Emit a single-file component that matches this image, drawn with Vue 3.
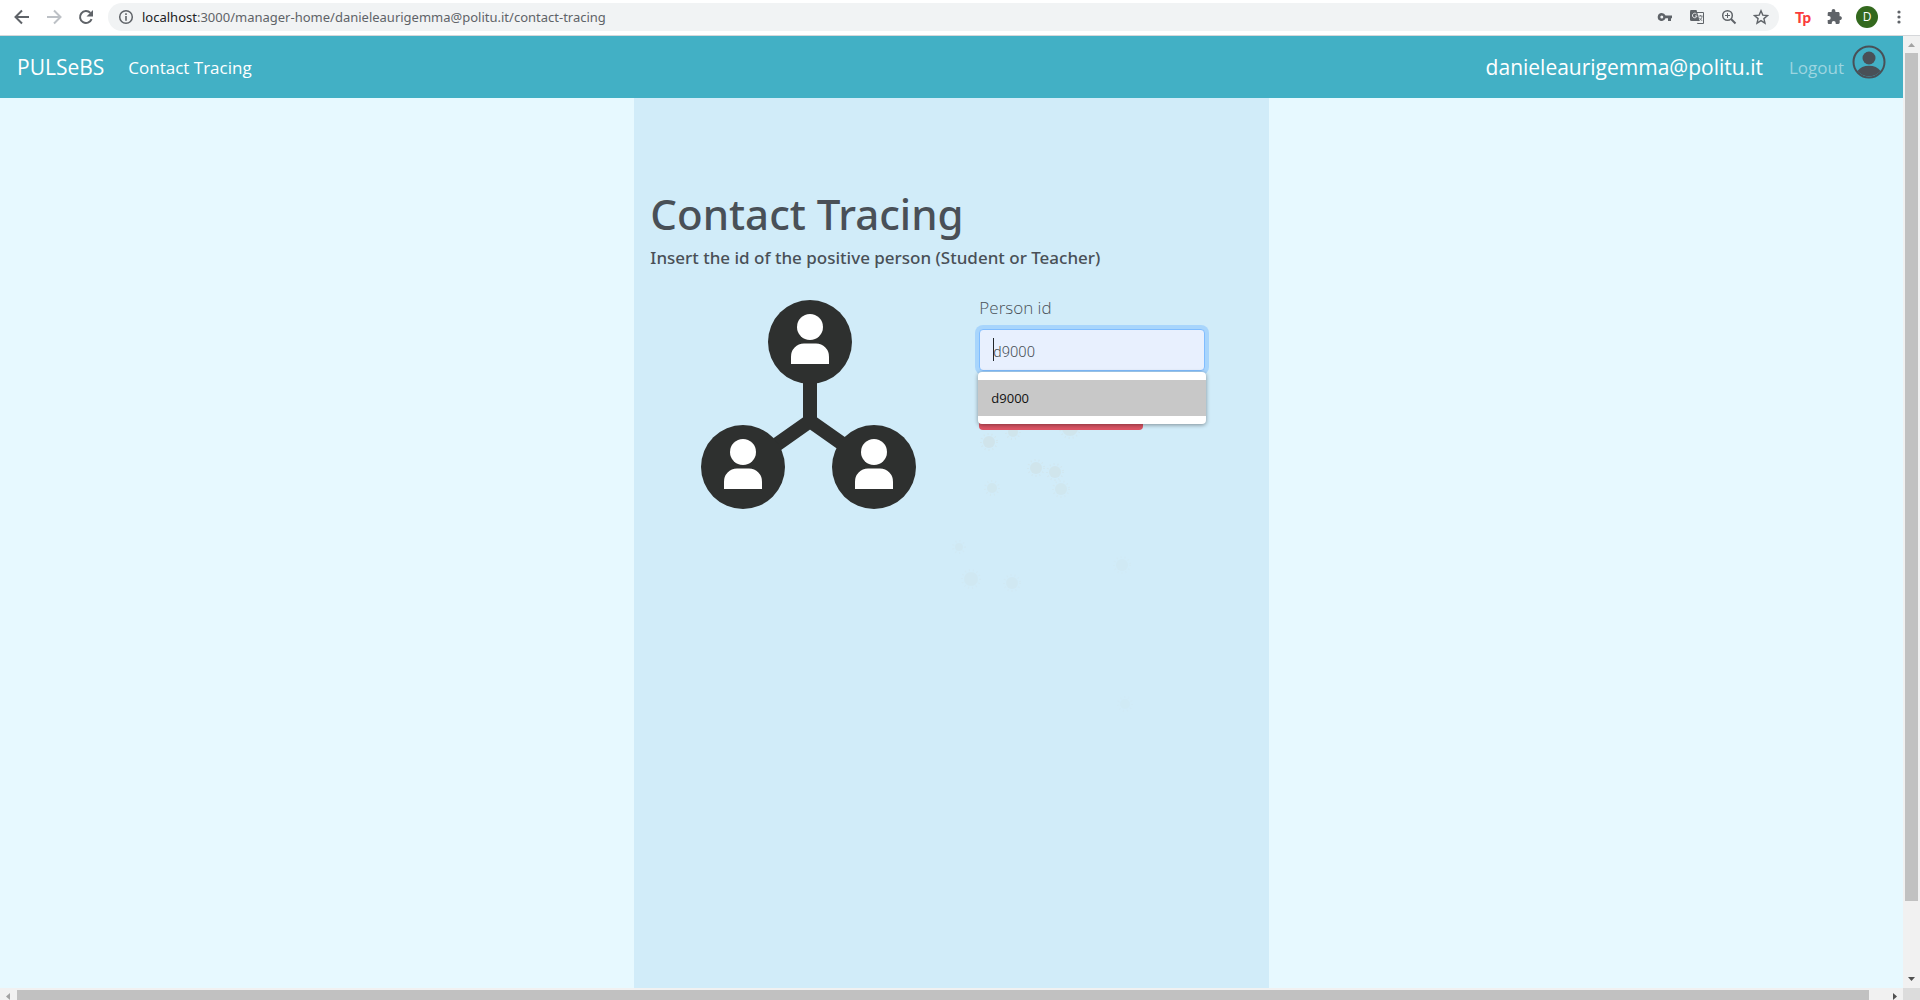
<script setup>
import { ref } from 'vue'

const url = ref('/manager-home/danieleaurigemma@politu.it/contact-tracing')
const personId = ref('d9000')
const suggestions = ['d9000']
const nodes = [
  { x: 109, y: 42 },
  { x: 42, y: 167 },
  { x: 173, y: 167 },
]
const spots = [
  { x: 110, y: 142, r: 6, o: 0.9 },
  { x: 134, y: 132, r: 5, o: 0.8 },
  { x: 191, y: 128, r: 8, o: 0.8 },
  { x: 157, y: 168, r: 6, o: 0.8 },
  { x: 176, y: 172, r: 6, o: 0.8 },
  { x: 113, y: 188, r: 5, o: 0.6 },
  { x: 182, y: 189, r: 6, o: 0.6 },
  { x: 80, y: 247, r: 4, o: 0.4 },
  { x: 92, y: 279, r: 7, o: 0.4 },
  { x: 133, y: 283, r: 6, o: 0.4 },
  { x: 243, y: 265, r: 6, o: 0.3 },
  { x: 246, y: 404, r: 5, o: 0.2 },
]
</script>

<template>
  <div class="browser">
    <header class="toolbar">
      <button class="tool" aria-label="Back">
        <svg width="16" height="16" viewBox="0 0 16 16"><path d="M15 8H2M8 1.500 1.500 8 8 14.500" fill="none" stroke="#5f6368" stroke-width="2" /></svg>
      </button>
      <button class="tool" aria-label="Forward">
        <svg width="16" height="16" viewBox="0 0 16 16"><path d="M1 8h13M8 1.500 14.500 8 8 14.500" fill="none" stroke="#bdc1c6" stroke-width="2" /></svg>
      </button>
      <button class="tool" aria-label="Reload">
        <svg width="16" height="16" viewBox="0 0 16 16"><path d="M13.600 10.200A6 6 0 1 1 12.400 3.900" fill="none" stroke="#5f6368" stroke-width="2" /><path d="M15 1v6.500H8.500z" fill="#5f6368" /></svg>
      </button>
      <div class="address">
        <svg width="16" height="16" viewBox="0 0 16 16"><circle cx="8" cy="8" r="6.300" fill="none" stroke="#5f6368" stroke-width="1.500" /><path d="M7.200 4.300h1.600v1.600H7.200zM7.200 7h1.600v4.700H7.200z" fill="#5f6368" /></svg>
        <span class="url"><b>localhost</b>:3000{{ url }}</span>
        <div class="page-actions">
          <button class="tool" aria-label="Passwords">
            <svg width="16" height="16" viewBox="0 0 16 16"><path fill-rule="evenodd" d="M4.800 4a4 4 0 1 0 3.700 5.300H11V12h3V9.300h1V6.600H8.500A4 4 0 0 0 4.800 4zm0 2.500a1.500 1.500 0 1 1 0 3 1.500 1.500 0 0 1 0-3z" fill="#5f6368" /></svg>
          </button>
          <button class="tool" aria-label="Translate">
            <svg width="16" height="16" viewBox="0 0 16 16"><path d="M7 3.500h7.500v11H8" fill="none" stroke="#5f6368" /><path d="M1.500 1h6l3.200 11H2.500A1.500 1.500 0 0 1 1 10.500v-8z" fill="#5f6368" /><path d="M7.500 5A2.300 2.300 0 1 0 8 7H6M9.500 12l-1.500 2.500" fill="none" stroke="#e4e5e7" /><path d="M9.500 7h4M11.500 6v1M10.300 8.800l2.700 3M13 7c0 2-1 3.500-2.500 4.500" fill="none" stroke="#777b80" /></svg>
          </button>
          <button class="tool" aria-label="Zoom">
            <svg width="16" height="16" viewBox="0 0 16 16"><circle cx="6.500" cy="6.500" r="4.800" fill="none" stroke="#5f6368" stroke-width="1.500" /><path d="M10 10l4.500 4.500" stroke="#5f6368" stroke-width="2" /><path d="M4 6.500h5M6.500 4v5" stroke="#5f6368" /></svg>
          </button>
          <button class="tool" aria-label="Bookmark">
            <svg width="16" height="16" viewBox="0 0 16 16"><path d="M8 1.800l1.800 4.300 4.700.4-3.600 3.100 1.100 4.600L8 11.700l-4 2.500 1.100-4.600L1.500 6.500l4.700-.4z" fill="none" stroke="#5f6368" stroke-width="1.400" /></svg>
          </button>
        </div>
      </div>
      <div class="extensions">
        <button class="tool tp" aria-label="Extension">Tp</button>
        <button class="tool" aria-label="Extensions">
          <svg width="16" height="16" viewBox="0 0 16 16"><path d="M13.600 7.300h-1V4.400c0-.8-.6-1.400-1.400-1.400H8.400V2a1.900 1.900 0 0 0-3.800 0v1H1.900C1.200 3 .7 3.600.7 4.400V7h1a2 2 0 0 1 0 4h-1v2.700c0 .8.600 1.300 1.300 1.300h2.700v-1a2 2 0 0 1 4 0v1h2.600c.8 0 1.400-.6 1.400-1.400v-2.700h.9a1.900 1.900 0 0 0 0-3.600z" fill="#5f6368" /></svg>
        </button>
        <button class="profile" aria-label="Profile">D</button>
        <button class="tool" aria-label="Menu">
          <svg width="16" height="16" viewBox="0 0 16 16"><g fill="#5f6368"><circle cx="8" cy="3" r="1.600" /><circle cx="8" cy="8" r="1.600" /><circle cx="8" cy="13" r="1.600" /></g></svg>
        </button>
      </div>
    </header>

    <div class="viewport">
      <div class="page">
        <nav class="navbar">
          <a class="brand" href="#">PULSeBS</a>
          <a class="nav-link" href="#">Contact Tracing</a>
          <span class="user">danieleaurigemma@politu.it</span>
          <a class="logout" href="#">Logout</a>
          <svg class="avatar" width="34" height="34" viewBox="0 0 34 34">
            <circle cx="17" cy="17" r="15.500" fill="none" stroke="#495057" stroke-width="2" />
            <circle cx="17" cy="13" r="6.500" fill="#495057" />
            <path d="M5.500 26C8 22.500 12 20.800 17 20.800S26 22.500 28.500 26A15 15 0 0 1 5.500 26z" fill="#495057" />
          </svg>
        </nav>
        <main class="content">
          <section class="panel">
            <h1>Contact Tracing</h1>
            <h2>Insert the id of the positive person (Student or Teacher)</h2>
            <div class="columns">
              <svg class="diagram" width="215" height="209" viewBox="0 0 215 209" role="img" aria-label="Contacts">
                <path d="M109 70v51M48 164l61-43 61 43" fill="none" stroke="#2e302f" stroke-width="14" />
                <g v-for="n in nodes" :key="n.x" :transform="`translate(${n.x} ${n.y})`">
                  <circle r="42" fill="#2e302f" />
                  <circle cy="-15" r="13" fill="#fff" />
                  <path d="M-19 22V15A13 13 0 0 1-6 1.500H6A13 13 0 0 1 19 15V22z" fill="#fff" />
                </g>
              </svg>
              <form class="tracing" @submit.prevent>
                <label for="person">Person id</label>
                <div class="field">
                  <input id="person" v-model="personId" type="text" autocomplete="off" />
                  <span class="caret"></span>
                  <ul class="suggestions">
                    <li v-for="s in suggestions" :key="s">{{ s }}</li>
                  </ul>
                </div>
                <button class="submit" type="submit" aria-label="Submit"></button>
                <svg class="virus" width="280" height="420" viewBox="0 0 280 420" aria-hidden="true">
                  <g v-for="s in spots" :key="s.x" :opacity="s.o">
                    <circle :cx="s.x" :cy="s.y" :r="s.r" fill="#d0e4ea" />
                    <circle :cx="s.x" :cy="s.y" :r="s.r + 2" fill="none" stroke="#d3e6ed" stroke-width="2" stroke-dasharray="1 3" />
                  </g>
                </svg>
              </form>
            </div>
          </section>
        </main>
      </div>
      <div class="vbar">
        <svg width="17" height="17" viewBox="0 0 17 17"><path d="M5 11h7L8.500 7z" fill="#a3a3a3" /></svg>
        <span class="vthumb"></span>
        <svg width="17" height="17" viewBox="0 0 17 17"><path d="M5 6h7L8.500 10z" fill="#505050" /></svg>
      </div>
      <div class="hbar">
        <svg width="17" height="17" viewBox="0 0 17 17"><path d="M10 5v7L6 8.500z" fill="#a3a3a3" /></svg>
        <span class="hthumb"></span>
        <svg width="17" height="17" viewBox="0 0 17 17"><path d="M7 5v7l4-3.500z" fill="#505050" /></svg>
      </div>
      <div class="corner"></div>
    </div>
  </div>
</template>

<style>
body {
  overflow: hidden;
}
</style>

<style scoped>
* {
  box-sizing: border-box;
}
.browser {
  display: flex;
  flex-direction: column;
  height: 100vh;
  overflow: hidden;
  font-family: "Open Sans", "Noto Sans", sans-serif;
  background: #fff;
}
button {
  border: 0;
  padding: 0;
  background: none;
  font-family: inherit;
}
a {
  text-decoration: none;
}
svg {
  display: block;
  flex: none;
}
.toolbar {
  display: flex;
  align-items: center;
  gap: 16px;
  flex: none;
  height: 36px;
  padding: 0 13px 2px 14px;
  border-bottom: 1px solid #d5d7da;
}
.tool {
  flex: none;
  width: 16px;
  height: 16px;
}
.address {
  display: flex;
  align-items: center;
  flex: 1;
  gap: 8px;
  height: 28px;
  margin-left: -2px;
  padding: 0 10px;
  border-radius: 14px;
  background: #f1f3f4;
}
.url {
  flex: 1;
  font-family: "Noto Sans", sans-serif;
  font-size: 13px;
  color: #5f6368;
}
.url b {
  font-weight: 400;
  color: #202124;
}
.page-actions,
.extensions {
  display: flex;
  align-items: center;
  gap: 16px;
}
.extensions {
  gap: 13px;
}
.tp {
  margin-right: 3px;
  font: 900 15px/16px Lato, sans-serif;
  color: #fa3c3c;
}
.profile {
  width: 22px;
  height: 22px;
  border-radius: 50%;
  background: #33691e;
  color: #fff;
  font-size: 12px;
}
.viewport {
  display: grid;
  grid-template-columns: 1fr 17px;
  grid-template-rows: 1fr 12px;
  flex: 1;
  min-height: 0;
}
.page {
  display: flex;
  flex-direction: column;
  background: #e7f9ff;
}
.navbar {
  display: flex;
  align-items: center;
  height: 62px;
  padding: 0 17px;
  background: #42b0c5;
}
.brand,
.user {
  font-size: 21px;
  color: #fff;
}
.nav-link,
.logout {
  font-size: 17px;
  color: #fff;
}
.nav-link {
  margin-left: 24px;
}
.user {
  margin-left: auto;
}
.logout {
  margin-left: 26px;
  color: #9cd5e0;
}
.avatar {
  margin: 0 0 10px 8px;
}
.content {
  display: flex;
  justify-content: center;
  flex: 1;
}
.panel {
  width: 33.33%;
  padding: 89px 16px 0;
  background: #d1ecf9;
  color: #495057;
}
h1,
h2 {
  margin: 0;
  font-family: "Noto Sans", "Open Sans", sans-serif;
  font-weight: 500;
  white-space: nowrap;
}
h1 {
  margin-bottom: 7px;
  font-size: 42px;
  line-height: 54px;
}
h2 {
  font-size: 17px;
  line-height: 20px;
}
.columns {
  display: flex;
  gap: 63px;
  padding: 32px 0 0 51px;
}
.tracing {
  position: relative;
  width: 226px;
}
label {
  display: block;
  margin-bottom: 13px;
  font-size: 17px;
  line-height: 16px;
  font-weight: 300;
}
.field {
  position: relative;
}
input {
  display: block;
  width: 100%;
  height: 42px;
  padding: 4px 13px 0;
  border: 1px solid #80bdff;
  border-radius: 4px;
  outline: 0;
  background: #e8f0fe;
  box-shadow: 0 0 0 4px #a8d5fc;
  color: #495057;
  font: 300 15px/20px Roboto, "Open Sans", sans-serif;
}
.caret {
  position: absolute;
  left: 14px;
  top: 9px;
  width: 1px;
  height: 23px;
  background: #212529;
}
.suggestions {
  position: absolute;
  left: -1px;
  right: -1px;
  top: 43px;
  z-index: 1;
  margin: 0;
  padding: 8px 0;
  list-style: none;
  border-radius: 4px;
  background: #fff;
  box-shadow: 0 1px 4px rgba(0, 0, 0, 0.4);
}
.suggestions li {
  padding: 0 13px;
  background: #c8c8c8;
  color: #111;
  font-size: 13px;
  line-height: 36px;
}
.submit {
  display: block;
  width: 164px;
  height: 42px;
  margin-top: 17px;
  border-radius: 4px;
  background: #dc5464;
}
.virus {
  position: absolute;
  left: -100px;
  top: 0;
  z-index: -1;
}
.tracing {
  z-index: 0;
}
.vbar,
.hbar {
  display: flex;
  background: #f1f1f1;
}
.vbar {
  flex-direction: column;
}
.hbar {
  overflow: hidden;
}
.vthumb {
  flex: 0 1 848px;
  width: 13px;
  margin: 0 2px;
  background: #c1c1c1;
}
.vbar svg:last-child {
  margin-top: auto;
}
.hbar svg:last-child {
  margin-left: auto;
}
.hthumb {
  flex: 0 1 1852px;
  margin-top: 2px;
  background: #c1c1c1;
}
.corner {
  background: #dcdcdc;
}
</style>
